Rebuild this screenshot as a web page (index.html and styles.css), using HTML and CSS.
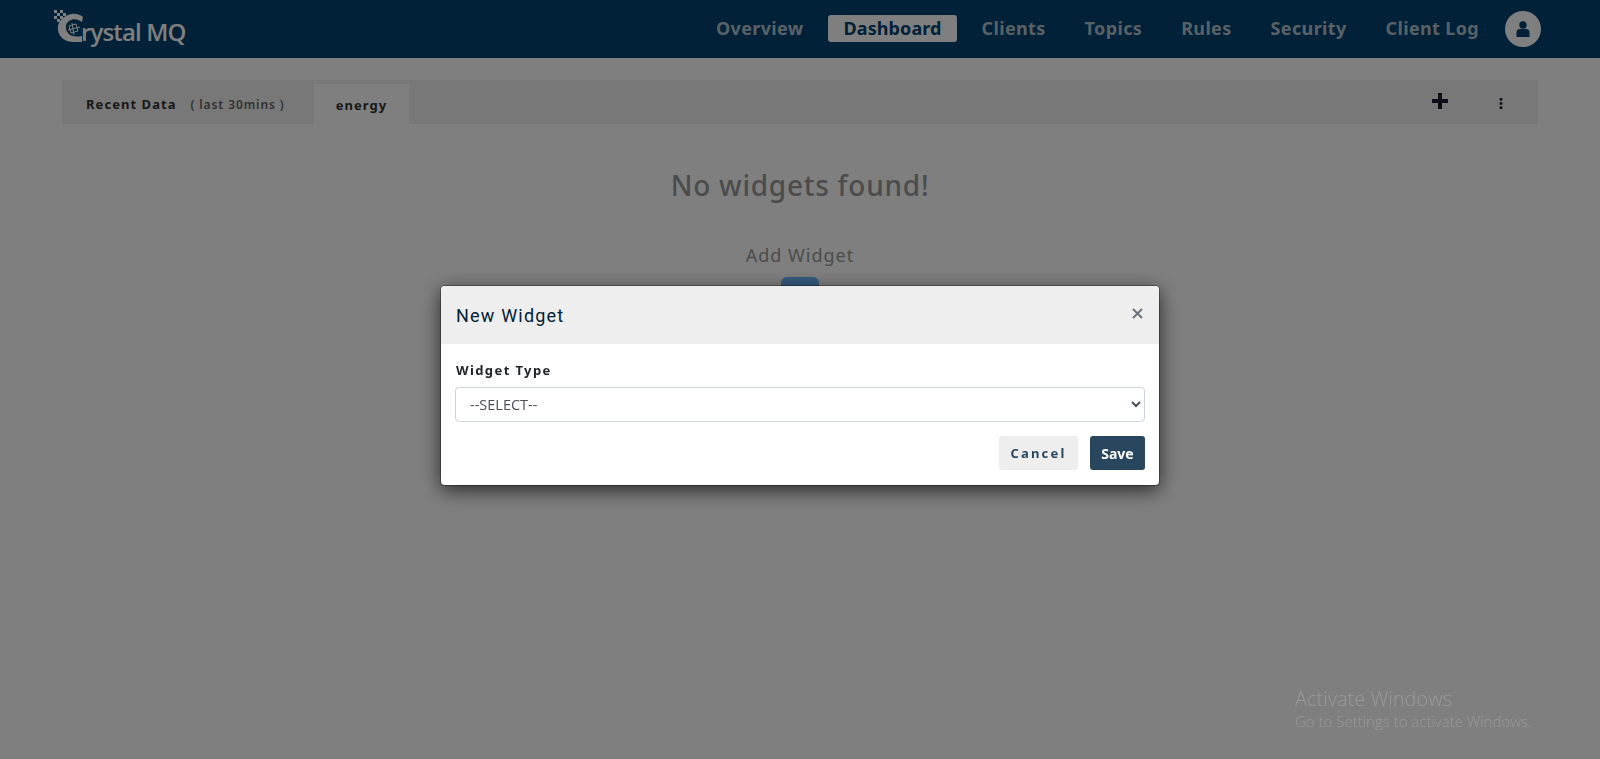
FILE: index.html
```html
<!DOCTYPE html>
<html>
<head>
  <meta charset="UTF-8">
  <title>Crystal MQ</title>
  <link rel="stylesheet" href="styles.css">
</head>
<body>
  <header class="topbar">
    <a class="logo">
      <svg class="logo_icon" width="30" height="34" viewBox="0 0 30 34">
        <path d="M29 7 C24 3 17 3 12 6 C6 9 3 15 4 20 C5 28 12 32 19 32 L28 32 L28 26 C23 27 17 27 14 23 C11 19 11 14 15 11 C19 8 24 9 28 12 Z" fill="#fff"/>
        <path d="M15 16 L22 14 L24 21 L17 23 Z M18 13 L20 25 M14 20 L26 17" fill="none" stroke="#fff" stroke-width="1"/>
        <g fill="#fff">
          <rect x="0" y="0" width="3" height="3"/><rect x="6" y="0" width="3" height="3"/>
          <rect x="3" y="3" width="3" height="3"/><rect x="9" y="3" width="3" height="3"/>
          <rect x="0" y="6" width="3" height="3"/><rect x="6" y="6" width="3" height="3"/>
          <rect x="3" y="9" width="3" height="3"/>
        </g>
      </svg>
      <span class="logo_text">rystal MQ</span>
    </a>
    <nav class="nav">
      <a class="nav_item">Overview</a>
      <a class="nav_item nav_active">Dashboard</a>
      <a class="nav_item">Clients</a>
      <a class="nav_item">Topics</a>
      <a class="nav_item">Rules</a>
      <a class="nav_item">Security</a>
      <a class="nav_item">Client Log</a>
    </nav>
    <span class="avatar">
      <svg width="14" height="16" viewBox="0 0 14 16">
        <circle cx="7" cy="4" r="3.7" fill="#004271"/>
        <path d="M0.5 16 V11 C0.5 9 2 8 4 8 L10 8 C12 8 13.5 9 13.5 11 V16 Z" fill="#004271"/>
      </svg>
    </span>
  </header>

  <main class="content">
    <div class="tabs">
      <div class="tab_recent"><b>Recent Data</b><span class="tab_note">( last 30mins )</span></div>
      <div class="tab_active">energy</div>
      <div class="tab_tools">
        <svg class="tool_plus" width="16" height="16" viewBox="0 0 16 16"><path d="M6 0 H10 V6 H16 V10 H10 V16 H6 V10 H0 V6 H6 Z" fill="#1c1c30"/></svg>
        <svg class="tool_dots" width="4" height="11" viewBox="0 0 4 11"><g fill="#1c1c30"><rect x="0.7" y="0" width="2.6" height="2.6"/><rect x="0.7" y="4.2" width="2.6" height="2.6"/><rect x="0.7" y="8.4" width="2.6" height="2.6"/></g></svg>
      </div>
    </div>
    <div class="empty">
      <h2 class="empty_title">No widgets found!</h2>
      <div class="empty_add">Add Widget</div>
      <button class="add_btn"></button>
    </div>
  </main>

  <div class="overlay">
    <div class="modal">
      <div class="modal_head">
        <span class="modal_title">New Widget</span>
        <svg class="modal_close" width="11" height="11" viewBox="0 0 11 11"><path d="M1 1 L10 10 M10 1 L1 10" stroke="#6c757d" stroke-width="2" fill="none"/></svg>
      </div>
      <div class="modal_body">
        <label class="field_label">Widget Type</label>
        <select class="field_select"><option>--SELECT--</option></select>
        <div class="modal_actions">
          <button class="btn btn_cancel">Cancel</button>
          <button class="btn btn_save">Save</button>
        </div>
      </div>
    </div>
  </div>

  <div class="activate">
    <div class="activate_big">Activate Windows</div>
    <div class="activate_small">Go to Settings to activate Windows.</div>
  </div>
</body>
</html>
```

FILE: styles.css
```css
html, body {
  margin: 0;
  height: 759px;
  overflow: hidden;
  background: #fff;
  font-family: "Noto Sans", "Open Sans", sans-serif;
}

/* top bar */
.topbar {
  height: 58px;
  background: #004271;
  display: flex;
  align-items: center;
  padding-left: 54px;
  padding-right: 59px;
}
.logo {
  display: flex;
  align-items: center;
  color: #fff;
  margin-right: auto;
}
.logo_icon {
  margin-bottom: 4px;
}
.logo_text {
  font-family: "Open Sans", sans-serif;
  font-size: 24px;
  font-weight: 600;
  letter-spacing: -0.85px;
  margin-left: -3px;
  margin-top: 4px;
}
.nav {
  display: flex;
  align-items: center;
  gap: 9px;
  margin-bottom: 2px;
}
.nav_item {
  color: #b4c2cc;
  font-size: 18px;
  font-weight: 700;
  letter-spacing: 0.35px;
  padding: 0 15px;
  height: 27px;
  line-height: 27px;
}
.nav_active {
  background: #fff;
  color: #004271;
  border-radius: 3px;
  letter-spacing: 0.1px;
  margin: 0 1px;
}
.avatar {
  width: 36px;
  height: 36px;
  margin-left: 11px;
  border-radius: 50%;
  background: #fff;
  display: flex;
  align-items: center;
  justify-content: center;
}

/* page */
.content {
  padding: 22px 62px 0;
}
.tabs {
  height: 44px;
  background: #f0f0f0;
  display: flex;
  align-items: flex-end;
}
.tab_recent {
  height: 44px;
  line-height: 48px;
  padding-left: 24px;
  width: 228px;
  font-size: 13px;
  letter-spacing: 1.05px;
  color: #333;
}
.tab_note {
  margin-left: 14px;
  font-weight: 600;
  font-size: 12px;
  letter-spacing: 0.9px;
  color: #666;
}
.tab_active {
  background: #fff;
  width: 95px;
  height: 40px;
  line-height: 42px;
  text-align: center;
  font-size: 13px;
  font-weight: 700;
  letter-spacing: 1px;
  color: #333;
}
.tab_tools {
  margin-left: auto;
  height: 44px;
  display: flex;
  align-items: center;
  gap: 51px;
  padding-right: 35px;
}
.tool_plus {
  margin-bottom: 2px;
}
.tool_dots {
  margin-top: 2px;
}
.empty {
  text-align: center;
  color: #999;
}
.empty_title {
  margin: 41px 0 0;
  font-size: 28px;
  line-height: 40px;
  font-weight: 500;
  letter-spacing: 0.75px;
}
.empty_add {
  margin-top: 37px;
  font-size: 18px;
  line-height: 26px;
  letter-spacing: 1px;
}
.add_btn {
  display: block;
  margin: 9px auto 0;
  width: 38px;
  height: 34px;
  border: 0;
  border-radius: 6px;
  background: #6bb8ff;
}

/* modal */
.overlay {
  position: fixed;
  top: 0;
  left: 0;
  right: 0;
  bottom: 0;
  background: rgba(0, 0, 0, 0.5);
  display: flex;
  justify-content: center;
  align-items: flex-start;
}
.modal {
  width: 718px;
  height: 199px;
  margin-top: 286px;
  background: #fff;
  border-radius: 4px;
  overflow: hidden;
  box-shadow: 0 0 0 1px rgba(0, 0, 0, 0.3), 0 5px 20px rgba(0, 0, 0, 0.7);
}
.modal_head {
  height: 58px;
  background: #eee;
  display: flex;
  align-items: center;
  justify-content: space-between;
  padding: 0 16px 0 15px;
}
.modal_title {
  font-family: Roboto, sans-serif;
  font-size: 18px;
  letter-spacing: 1.2px;
  color: #002138;
}
.modal_close {
  margin-bottom: 4px;
}
.modal_body {
  padding: 16px 14px 0 14px;
}
.field_label {
  display: block;
  margin-left: 1px;
  font-size: 13px;
  font-weight: 700;
  letter-spacing: 1.4px;
  color: #212529;
  line-height: 20px;
}
.field_select {
  display: block;
  width: 100%;
  height: 35px;
  margin-top: 7px;
  padding: 0 10px;
  background: #fff;
  border: 1px solid #ced4da;
  border-radius: 4px;
  font-family: "Open Sans", sans-serif;
  font-weight: 400;
  font-size: 14.5px;
  color: #495057;
}
.modal_actions {
  display: flex;
  justify-content: flex-end;
  gap: 12px;
  margin-top: 14px;
}
.btn {
  height: 34px;
  border: 0;
  border-radius: 3px;
  font-family: "Noto Sans", sans-serif;
  font-size: 13px;
  font-weight: 700;
}
.btn_cancel {
  width: 79px;
  background: #eee;
  color: #28475f;
  letter-spacing: 2.2px;
}
.btn_save {
  width: 55px;
  background: #28475f;
  color: #fff;
  font-size: 14px;
}

/* windows watermark */
.activate {
  position: fixed;
  left: 1295px;
  top: 686px;
  color: #999;
  font-family: "Open Sans", sans-serif;
  font-weight: 300;
}
.activate_big {
  font-size: 20px;
  line-height: 25px;
}
.activate_small {
  font-size: 15px;
  line-height: 20px;
}
```
